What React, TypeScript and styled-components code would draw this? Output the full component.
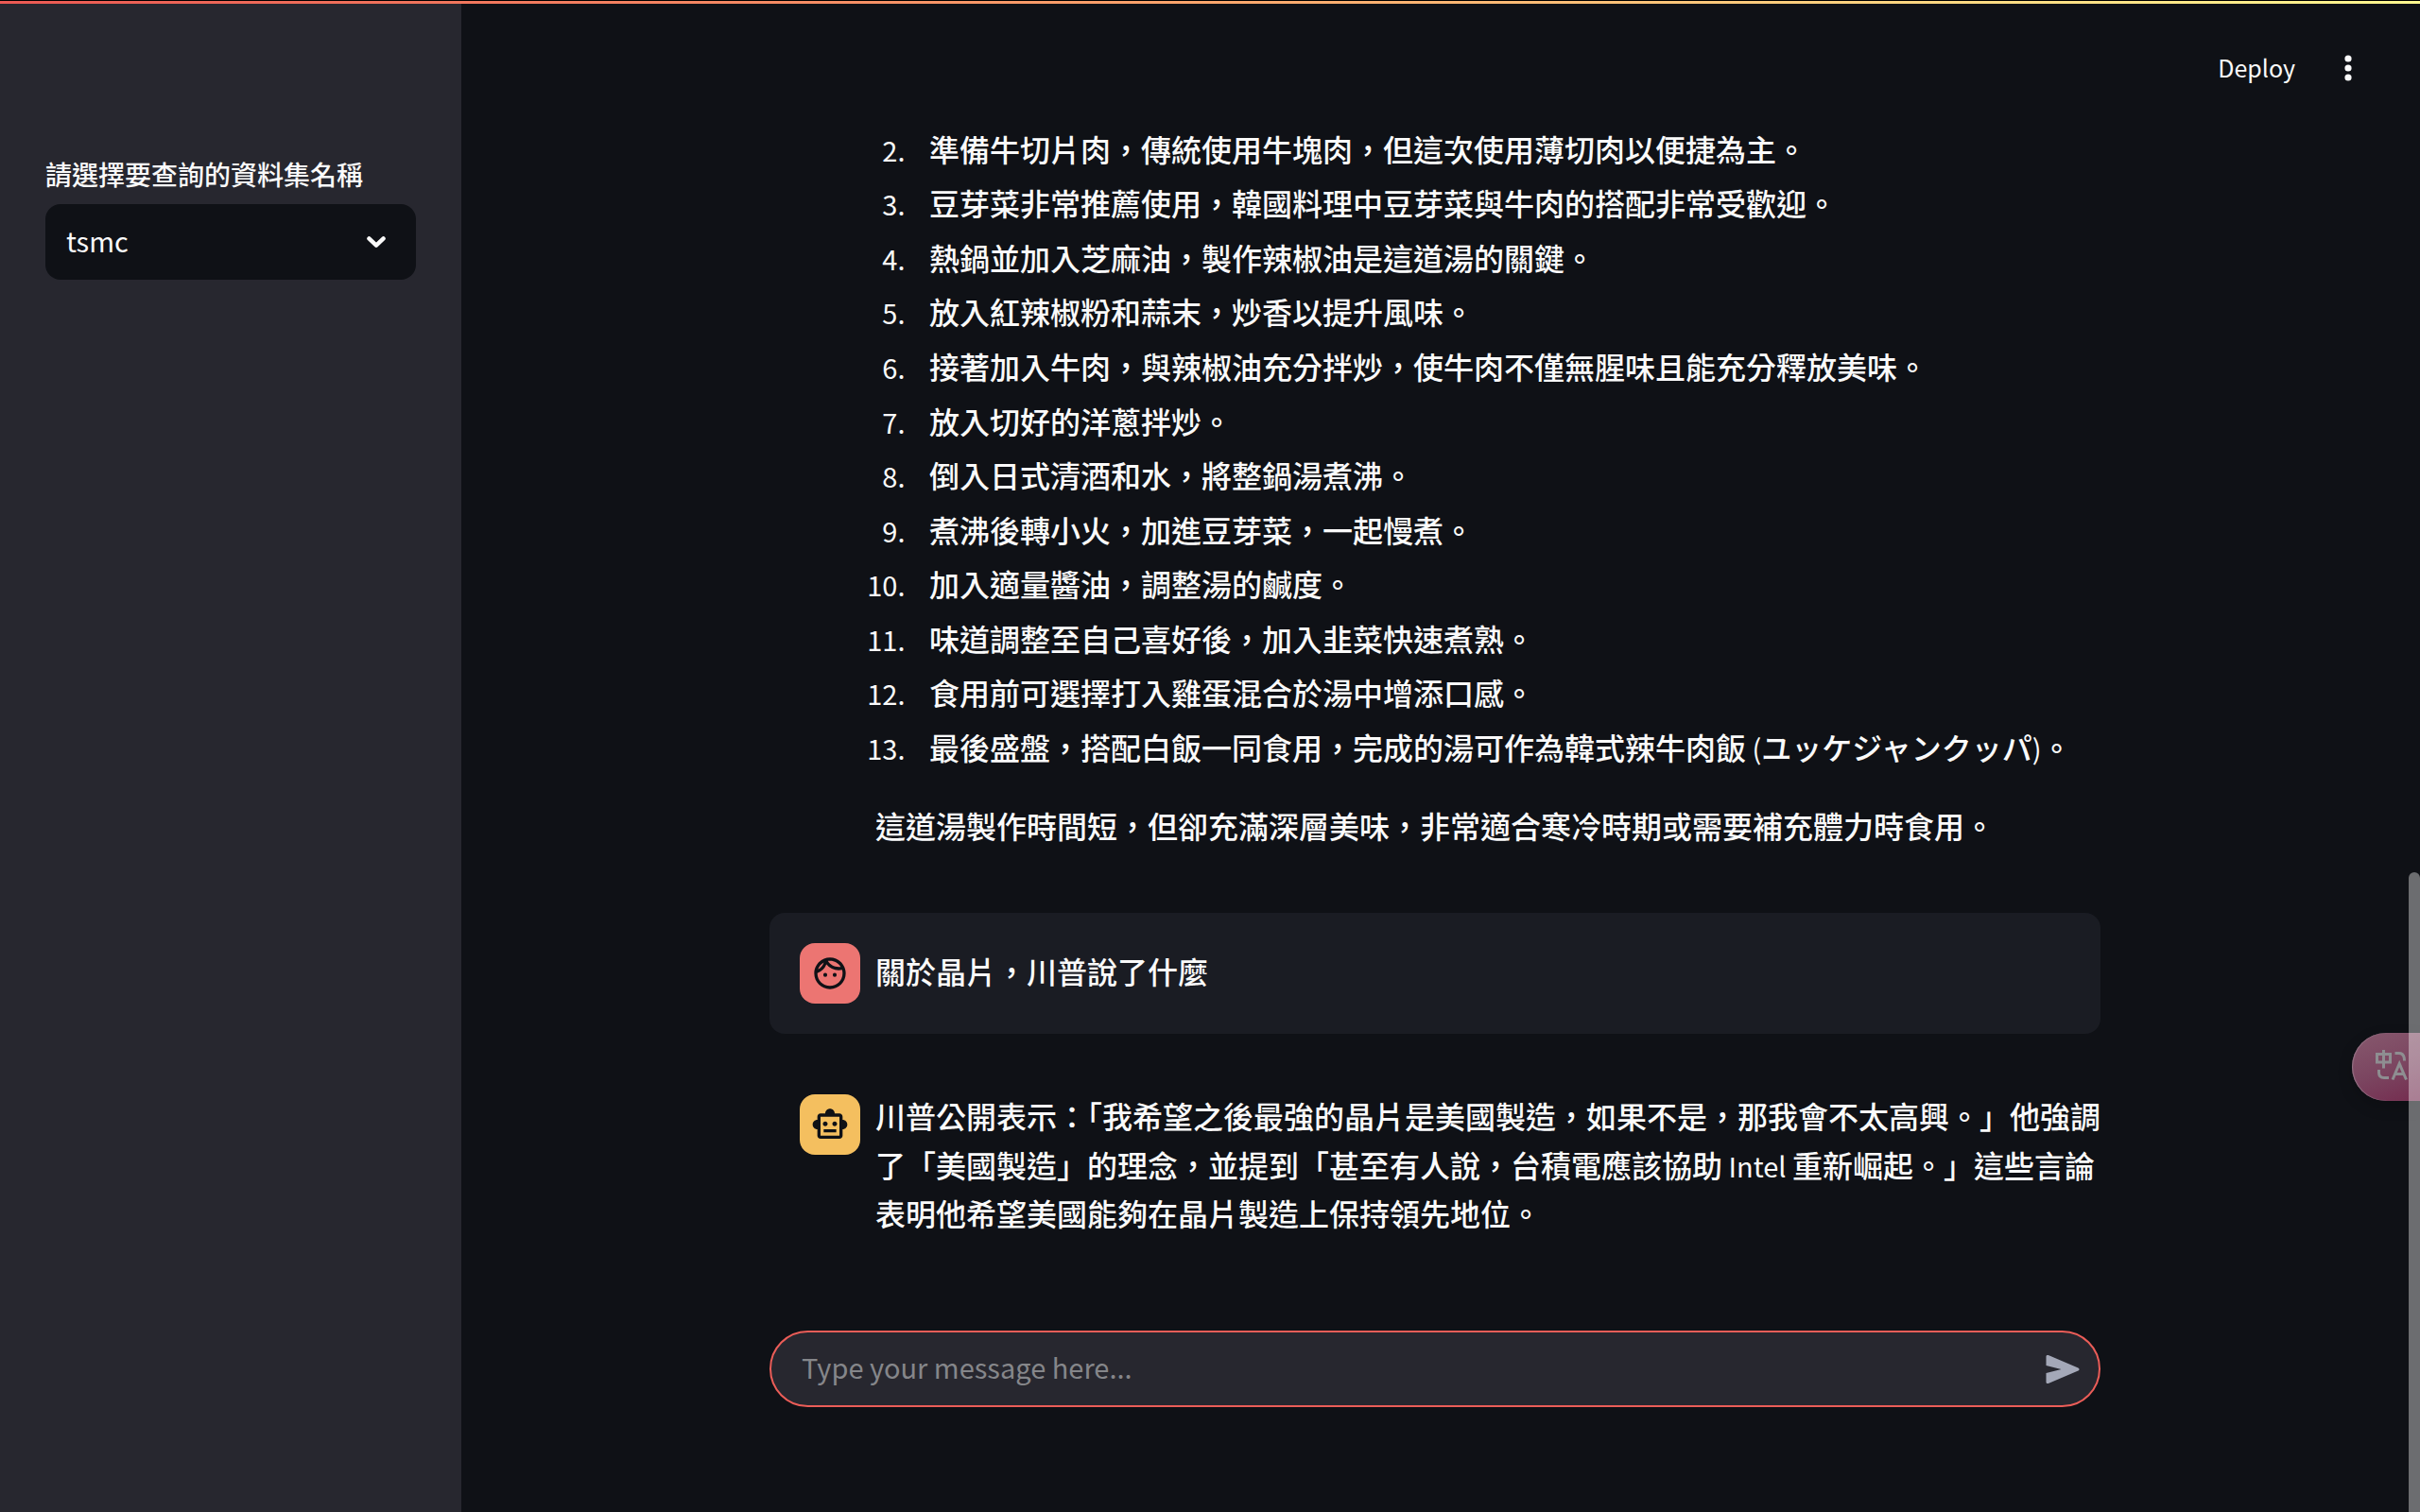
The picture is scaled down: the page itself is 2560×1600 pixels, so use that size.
import React, { useState } from 'react';
import styled, { createGlobalStyle } from 'styled-components';
import { MdOutlineFace, MdOutlineSmartToy } from 'react-icons/md';

const GlobalStyle = createGlobalStyle`
  *, *::before, *::after { box-sizing: border-box; }
  body {
    margin: 0;
    background: #0f1116;
    color: #fafafa;
    font-family: "Noto Sans CJK TC", "Noto Sans CJK JP", sans-serif;
    font-size: 32px;
    font-weight: 500;
    line-height: 1.6;
  }
  button, input, select { font-family: inherit; color: inherit; }
`;

const Page = styled.div`
  display: flex;
  flex-direction: column;
  height: 100vh;
  overflow: hidden;
`;

const Decoration = styled.div`
  flex: none;
  height: 4px;
  border-top: 1px solid #000;
  background: linear-gradient(90deg, #ec5953, #fba66c, #fdf88f) padding-box;
`;

const Body = styled.div`
  display: flex;
  flex: 1;
  min-height: 0;
`;

const Sidebar = styled.aside`
  flex: none;
  width: 488px;
  padding: 156px 48px 48px;
  background: #27272f;
`;

const FieldLabel = styled.label`
  display: block;
  margin-bottom: 8px;
  font-size: 28px;
  line-height: 48px;
`;

const SelectBox = styled.div`
  display: grid;
  align-items: center;
  height: 80px;
  border-radius: 16px;
  background: #0f1116;
  > * { grid-area: 1 / 1; }
`;

const Select = styled.select`
  appearance: none;
  width: 100%;
  height: 100%;
  padding: 0 72px 4px 22px;
  border: 0;
  border-radius: 16px;
  outline: 0;
  background: transparent;
  font-size: 29px;
  font-weight: 400;
`;

const ChevronIcon = styled.svg`
  justify-self: end;
  width: 24px;
  height: 24px;
  margin-right: 30px;
  pointer-events: none;
`;

const Main = styled.main`
  display: flex;
  flex: 1;
  flex-direction: column;
  min-width: 0;
  padding: 0 12px 0 0;
`;

const Header = styled.header`
  display: flex;
  flex: none;
  align-items: center;
  justify-content: flex-end;
  gap: 24px;
  height: 120px;
  padding: 16px 40px 0 0;
`;

const PlainButton = styled.button`
  display: flex;
  align-items: center;
  justify-content: center;
  padding: 0 8px;
  border: 0;
  background: transparent;
  font-size: 25px;
  font-weight: 400;
  line-height: 40px;
`;

const ButtonLabel = styled.span`
  padding-bottom: 2px;
`;

const DotsIcon = styled.svg`
  width: 32px;
  height: 32px;
`;

const Chat = styled.div`
  display: flex;
  flex: 1;
  flex-direction: column;
  justify-content: flex-end;
  gap: 32px;
  width: 100%;
  max-width: 1408px;
  min-height: 0;
  margin: 0 auto;
`;

const Message = styled.article<{ $user?: boolean }>`
  display: flex;
  gap: 16px;
  padding: ${p => (p.$user ? '32px' : '32px 0 32px 32px')};
  border-radius: 16px;
  background: ${p => (p.$user ? '#1a1c23' : 'transparent')};
`;

const Avatar = styled.div<{ $color: string }>`
  display: flex;
  flex: none;
  align-items: center;
  justify-content: center;
  width: 64px;
  height: 64px;
  border-radius: 16px;
  background: ${p => p.$color};
  color: #0f1116;
  font-size: 40px;
`;

const AvatarSpace = styled.div`
  flex: none;
  width: 64px;
`;

const Content = styled.div<{ $centered?: boolean }>`
  flex: 1;
  min-width: 0;
  margin: -3px 0 3px;
  align-self: ${p => (p.$centered ? 'center' : 'flex-start')};
`;

const Paragraph = styled.p`
  margin: 0;
`;

const Steps = styled.ol`
  margin: 0 0 32px;
  padding: 0;
`;

const Step = styled.li`
  margin: 0.2em 0 0.2em 38px;
  padding-left: 19px;
  &::marker { font-size: 29px; font-weight: 400; }
`;

const Latin = styled.span`
  font-size: 29px;
  font-weight: 400;
  line-height: 1;
`;

const Composer = styled.form`
  display: flex;
  flex: none;
  align-items: center;
  width: 100%;
  max-width: 1408px;
  height: 81px;
  margin: 64px auto 111px;
  padding: 0 12px 0 32px;
  border: 2px solid #eb5d58;
  border-radius: 41px;
  background: #27272f;
`;

const MessageInput = styled.input`
  flex: 1;
  min-width: 0;
  height: 72px;
  padding: 0 0 6px;
  border: 0;
  outline: 0;
  background: transparent;
  font-size: 29px;
  &::placeholder { color: #85868a; opacity: 1; }
`;

const SendIcon = styled.svg`
  width: 36px;
  height: 32px;
`;

const ScrollThumb = styled.div`
  position: absolute;
  right: 0;
  top: 923px;
  bottom: 0;
  width: 12px;
  border-radius: 6px 6px 0 0;
  background: rgba(255, 255, 255, 0.39);
`;

const TranslateButton = styled.button`
  position: absolute;
  right: 0;
  top: 1093px;
  display: flex;
  align-items: center;
  width: 72px;
  height: 72px;
  padding: 0 0 4px 24px;
  border: 0;
  border-radius: 36px 0 0 36px;
  background: linear-gradient(160deg, #87596e, #7b4560 55%, #742c4f);
  box-shadow: inset 1px 0 1px #98788a, 0 6px 16px rgba(0, 0, 0, 0.2);
`;

const TranslateIcon = styled.svg`
  width: 36px;
  height: 36px;
`;

const steps: React.ReactNode[] = [
  '準備牛切片肉，傳統使用牛塊肉，但這次使用薄切肉以便捷為主。',
  '豆芽菜非常推薦使用，韓國料理中豆芽菜與牛肉的搭配非常受歡迎。',
  '熱鍋並加入芝麻油，製作辣椒油是這道湯的關鍵。',
  '放入紅辣椒粉和蒜末，炒香以提升風味。',
  '接著加入牛肉，與辣椒油充分拌炒，使牛肉不僅無腥味且能充分釋放美味。',
  '放入切好的洋蔥拌炒。',
  '倒入日式清酒和水，將整鍋湯煮沸。',
  '煮沸後轉小火，加進豆芽菜，一起慢煮。',
  '加入適量醬油，調整湯的鹹度。',
  '味道調整至自己喜好後，加入韭菜快速煮熟。',
  '食用前可選擇打入雞蛋混合於湯中增添口感。',
  <>最後盛盤，搭配白飯一同食用，完成的湯可作為韓式辣牛肉飯<Latin> (</Latin>ユッケジャンクッパ<Latin>)</Latin>。</>,
];

export default function App() {
  const [draft, setDraft] = useState('');
  return (
    <Page lang="zh-Hant">
      <GlobalStyle />
      <Decoration />
      <Body>
        <Sidebar>
          <FieldLabel htmlFor="dataset">請選擇要查詢的資料集名稱</FieldLabel>
          <SelectBox>
            <Select id="dataset" defaultValue="tsmc">
              <option value="tsmc">tsmc</option>
            </Select>
            <ChevronIcon viewBox="0 0 24 24" fill="none" stroke="#fafafa" strokeWidth="4.4" strokeLinecap="round" strokeLinejoin="round" aria-hidden>
              <path d="M4.4 8.4 12 15.6 19.6 8.4" />
            </ChevronIcon>
          </SelectBox>
        </Sidebar>
        <Main>
          <Header>
            <PlainButton type="button"><ButtonLabel>Deploy</ButtonLabel></PlainButton>
            <PlainButton type="button" aria-label="Main menu">
              <DotsIcon viewBox="0 0 32 32" fill="#fafafa" aria-hidden>
                <circle cx="16" cy="6" r="3.6" />
                <circle cx="16" cy="16" r="3.6" />
                <circle cx="16" cy="26" r="3.6" />
              </DotsIcon>
            </PlainButton>
          </Header>
          <Chat>
            <Message>
              <AvatarSpace />
              <Content>
                <Steps start={2}>
                  {steps.map((step, i) => <Step key={i}>{step}</Step>)}
                </Steps>
                <Paragraph>這道湯製作時間短，但卻充滿深層美味，非常適合寒冷時期或需要補充體力時食用。</Paragraph>
              </Content>
            </Message>
            <Message $user>
              <Avatar $color="#ec7572"><MdOutlineFace aria-hidden /></Avatar>
              <Content $centered>
                <Paragraph>關於晶片，川普說了什麼</Paragraph>
              </Content>
            </Message>
            <Message>
              <Avatar $color="#f4bf5f"><MdOutlineSmartToy aria-hidden /></Avatar>
              <Content>
                <Paragraph>
                  川普公開表示：「我希望之後最強的晶片是美國製造，如果不是，那我會不太高興。」他強調了「美國製造」的理念，並提到「甚至有人說，台積電應該協助<Latin> Intel </Latin>重新崛起。」這些言論表明他希望美國能夠在晶片製造上保持領先地位。
                </Paragraph>
              </Content>
            </Message>
          </Chat>
          <Composer onSubmit={e => e.preventDefault()}>
            <MessageInput
              aria-label="Message"
              placeholder="Type your message here..."
              value={draft}
              onChange={e => setDraft(e.target.value)}
            />
            <PlainButton type="submit" aria-label="Send message">
              <SendIcon viewBox="0 0 36 32" fill="#a4a8b8" aria-hidden>
                <path d="M.5 2.4C.5 1.1 1.6.6 2.8 1.1L34.4 14.4C35.9 15.1 35.9 16.9 34.4 17.6L2.8 30.9C1.6 31.4.5 30.9.5 29.6V20L16.5 16 .5 12Z" />
              </SendIcon>
            </PlainButton>
          </Composer>
        </Main>
      </Body>
      <TranslateButton type="button" aria-label="Translate">
        <TranslateIcon viewBox="0 0 36 36" fill="none" stroke="#8e8e91" strokeWidth="3" aria-hidden>
          <path d="M2.5 6.5H16.500V15H2.500ZM9.500 2V21.500" />
          <path d="M21.500 5.500H26Q31.500 5.500 31.500 13.500" />
          <path d="M4.500 23V26Q4.500 31.500 10 31.500H15" />
          <path d="M19 33.500 26.200 16.500 33.500 33.500M21.500 27.500H31" />
        </TranslateIcon>
      </TranslateButton>
      <ScrollThumb />
    </Page>
  );
}
